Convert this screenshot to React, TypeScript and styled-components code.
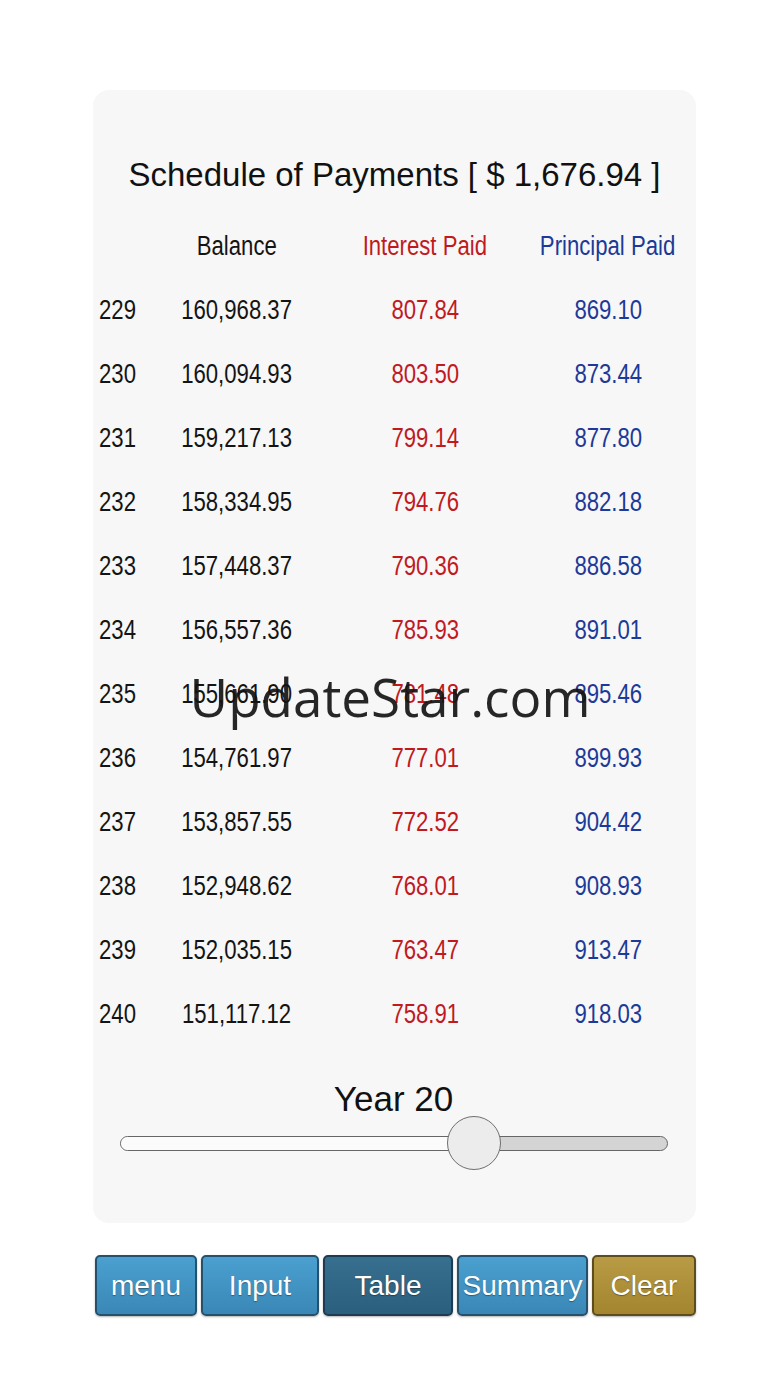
import React from "react";
import styled, { createGlobalStyle } from "styled-components";

const Global = createGlobalStyle`
  html, body { margin: 0; padding: 0; background: #ffffff; }
  body { font-family: "Liberation Sans", Arial, sans-serif; }
`;

const Page = styled.div`
  position: relative;
  width: 780px;
  min-height: 1387px;
  padding-top: 90px;
  box-sizing: border-box;
`;

const Card = styled.section`
  margin-left: 93px;
  width: 603px;
  height: 1133px;
  box-sizing: border-box;
  background: #f7f7f7;
  border-radius: 16px;
  padding: 65px 0 0 6px;
  display: flex;
  flex-direction: column;
`;

const Title = styled.h1`
  margin: 0 0 19px 0;
  padding-right: 6px;
  height: 40px;
  line-height: 40px;
  font-size: 33px;
  font-weight: normal;
  color: #111;
  text-align: center;
  white-space: nowrap;
`;

const Grid = styled.div`
  display: grid;
  grid-template-columns: 81px 114px 262px 104px;
  grid-auto-rows: 64px;
  font-family: "Liberation Sans Narrow", "Liberation Sans", sans-serif;
  font-size: 27px;
`;

const Cell = styled.div<{ $tone?: "black" | "red" | "blue"; $left?: boolean }>`
  display: flex;
  align-items: center;
  justify-content: ${(p) => (p.$left ? "flex-start" : "center")};
  white-space: nowrap;
  color: ${(p) =>
    p.$tone === "red" ? "#c01a1f" : p.$tone === "blue" ? "#1c3a98" : "#141414"};
`;

const Narrow = styled.span<{ $left?: boolean }>`
  display: inline-block;
  transform: scaleX(0.82);
  transform-origin: ${(p) => (p.$left ? "left center" : "center center")};
`;

const YearLabel = styled.div`
  margin-top: 33px;
  height: 40px;
  line-height: 40px;
  font-size: 35px;
  color: #111;
  text-align: center;
  padding-right: 8px;
`;

const SliderWrap = styled.div`
  position: relative;
  margin: -3px 0 0 21px;
  width: 548px;
  height: 54px;
  display: flex;
  align-items: center;
`;

const Track = styled.div`
  width: 100%;
  height: 13px;
  border: 1.5px solid #666666;
  border-radius: 8px;
  background: #d4d4d4;
  overflow: hidden;
  display: flex;
`;

const Fill = styled.div`
  height: 100%;
  background: #fbfbfb;
`;

const Thumb = styled.div`
  position: absolute;
  top: 0;
  width: 52px;
  height: 52px;
  border: 1.5px solid #6f6f6f;
  border-radius: 50%;
  background: #ececec;
`;

const ButtonBar = styled.nav`
  margin: 32px 0 0 95px;
  display: flex;
  gap: 4px;
`;

const Btn = styled.button<{ $w: number; $kind: "blue" | "active" | "gold" }>`
  width: ${(p) => p.$w}px;
  height: 61px;
  padding: 0;
  box-sizing: border-box;
  border-radius: 5px;
  font-family: "Liberation Sans", Arial, sans-serif;
  font-size: 28px;
  color: #ffffff;
  text-shadow: 0 1px 1px rgba(0, 0, 0, 0.35);
  border: 2px solid
    ${(p) => (p.$kind === "gold" ? "#5e4d1c" : p.$kind === "active" ? "#1b3c52" : "#24516e")};
  background: ${(p) =>
    p.$kind === "gold"
      ? "linear-gradient(#b99a45, #a3842f)"
      : p.$kind === "active"
      ? "linear-gradient(#376f8f, #2b5f7d)"
      : "linear-gradient(#4aa0d0, #3a87b6)"};
  box-shadow: 0 1px 2px rgba(0, 0, 0, 0.3);
`;

const Watermark = styled.div`
  position: absolute;
  left: 0;
  width: 780px;
  top: 665px;
  text-align: center;
  font-family: "Open Sans", "Noto Sans", sans-serif;
  font-size: 53px;
  line-height: 64px;
  color: rgba(20, 20, 20, 0.92);
  pointer-events: none;
`;

const rows: [number, string, string, string][] = [
  [229, "160,968.37", "807.84", "869.10"],
  [230, "160,094.93", "803.50", "873.44"],
  [231, "159,217.13", "799.14", "877.80"],
  [232, "158,334.95", "794.76", "882.18"],
  [233, "157,448.37", "790.36", "886.58"],
  [234, "156,557.36", "785.93", "891.01"],
  [235, "155,661.90", "781.48", "895.46"],
  [236, "154,761.97", "777.01", "899.93"],
  [237, "153,857.55", "772.52", "904.42"],
  [238, "152,948.62", "768.01", "908.93"],
  [239, "152,035.15", "763.47", "913.47"],
  [240, "151,117.12", "758.91", "918.03"],
];

export default function App() {
  const fraction = 0.662;
  const travel = 548 - 54;
  return (
    <Page>
      <Global />
      <Card>
        <Title>Schedule of Payments [ $ 1,676.94 ]</Title>
        <Grid>
          <Cell $left />
          <Cell><Narrow>Balance</Narrow></Cell>
          <Cell $tone="red"><Narrow>Interest Paid</Narrow></Cell>
          <Cell $tone="blue"><Narrow>Principal Paid</Narrow></Cell>
          {rows.map(([n, b, i, p]) => (
            <React.Fragment key={n}>
              <Cell $left><Narrow $left>{n}</Narrow></Cell>
              <Cell><Narrow>{b}</Narrow></Cell>
              <Cell $tone="red"><Narrow>{i}</Narrow></Cell>
              <Cell $tone="blue"><Narrow>{p}</Narrow></Cell>
            </React.Fragment>
          ))}
        </Grid>
        <YearLabel>Year 20</YearLabel>
        <SliderWrap>
          <Track>
            <Fill style={{ width: `${27 + fraction * travel}px` }} />
          </Track>
          <Thumb style={{ left: `${fraction * travel}px` }} />
        </SliderWrap>
      </Card>
      <ButtonBar>
        <Btn $w={102} $kind="blue">menu</Btn>
        <Btn $w={118} $kind="blue">Input</Btn>
        <Btn $w={130} $kind="active">Table</Btn>
        <Btn $w={131} $kind="blue">Summary</Btn>
        <Btn $w={104} $kind="gold">Clear</Btn>
      </ButtonBar>
      <Watermark>UpdateStar.com</Watermark>
    </Page>
  );
}
